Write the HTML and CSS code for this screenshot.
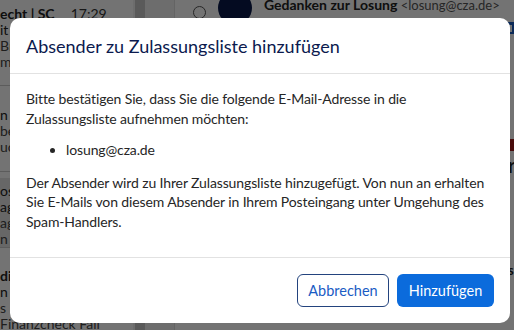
FILE: index.html
```html
<!DOCTYPE html>
<html lang="de">
<head>
    <meta charset="UTF-8">
    <meta name="viewport" content="width=device-width, initial-scale=1.0">
    <title>Absender zu Zulassungsliste hinzufügen</title>
    <link rel="stylesheet" href="styles.css">
</head>
<body>
    <!-- Mail app in the background -->
    <div class="app">
        <aside class="mail-list">
            <div class="mail-item">
                <div class="mail-top"><b>echt | SC</b><span class="mail-time">17:29</span></div>
                <div>it</div>
                <div class="muted">Br</div>
                <div class="muted">m</div>
            </div>
            <div class="mail-item">
                <div>&nbsp;</div>
                <div>n</div>
                <div class="muted">be</div>
                <div class="muted">uc</div>
            </div>
            <div class="mail-item selected">
                <div>os</div>
                <div>ag</div>
                <div class="muted">ag</div>
                <div class="muted">n 3</div>
            </div>
            <div class="mail-item">
                <div><b>di</b></div>
                <div>n Z</div>
                <div class="muted">s</div>
                <div class="muted">Finanzcheck Fall</div>
            </div>
        </aside>
        <div class="scrollbar"><div class="thumb"></div></div>
        <main class="reader">
            <div class="reader-head">
                <span class="radio"></span>
                <span class="avatar"></span>
                <div class="sender">
                    <div><b>Gedanken zur Losung</b> <span class="addr">&lt;losung@cza.de&gt;</span></div>
                    <div class="preview">Gedanken zur Tageslosung. Dennoch</div>
                </div>
                <span class="trash"></span>
            </div>
            <div class="reader-body">
                <div class="banner"></div>
                <div class="big">r</div>
                <div class="small"><b>s</b></div>
            </div>
        </main>
    </div>

    <div class="overlay"></div>

    <!-- Dialog -->
    <div class="dialog">
        <div class="dialog-header">
            <h2>Absender zu Zulassungsliste hinzufügen</h2>
        </div>
        <div class="dialog-body">
            <p>Bitte bestätigen Sie, dass Sie die folgende E-Mail-Adresse in die Zulassungsliste aufnehmen möchten:</p>
            <ul>
                <li>losung@cza.de</li>
            </ul>
            <p>Der Absender wird zu Ihrer Zulassungsliste hinzugefügt. Von nun an erhalten Sie E-Mails von diesem Absender in Ihrem Posteingang unter Umgehung des Spam-Handlers.</p>
        </div>
        <div class="dialog-footer">
            <button class="btn btn-outline">Abbrechen</button>
            <button class="btn btn-primary">Hinzufügen</button>
        </div>
    </div>
</body>
</html>
```

FILE: styles.css
```css
* {
    margin: 0;
    padding: 0;
    box-sizing: border-box;
}

body {
    width: 514px;
    height: 330px;
    overflow: hidden;
    font-family: 'Lato', 'Liberation Sans', sans-serif;
    color: #222;
    background: #fff;
}

/* Background app */
.app {
    display: flex;
    height: 330px;
}

.mail-list {
    width: 133px;
    font-size: 14px;
    line-height: 16px;
}

.mail-item {
    height: 86px;
    padding: 5px 0 0 0;
    border-bottom: 1px solid #ccc;
}

.mail-item:first-child {
    padding-top: 6px;
}

.mail-item.selected {
    background: #e4e4e4;
    height: 70px;
    margin-top: 6px;
}

.mail-item:last-child {
    padding-top: 20px;
}

.mail-top {
    display: flex;
    gap: 16px;
}

.mail-time {
    color: #333;
}

.muted {
    color: #444;
}

.scrollbar {
    width: 42px;
    display: flex;
    background: #f2f2f2;
    border-right: 1px solid #ddd;
}

.thumb {
    width: 10px;
    margin-left: 2px;
    background: #c8c8c8;
}

.reader {
    flex: 1;
    min-width: 0;
    overflow: hidden;
    background: #fff;
}

.reader-head {
    display: flex;
    align-items: flex-start;
    gap: 12px;
    padding-left: 18px;
    margin-top: -6px;
    font-size: 13px;
    line-height: 18px;
}

.radio {
    flex: none;
    width: 13px;
    height: 13px;
    margin-top: 12px;
    border: 1px solid #555;
    border-radius: 50%;
}

.avatar {
    flex: none;
    width: 34px;
    height: 34px;
    margin-top: -3px;
    background: #0a1a4a;
    border-radius: 50%;
}

.sender {
    flex: 1;
    min-width: 0;
    padding-top: 2px;
    white-space: nowrap;
    overflow: hidden;
}

.sender b {
    font-size: 14px;
}

.addr {
    color: #555;
}

.trash {
    flex: none;
    width: 10px;
    height: 12px;
    margin: 28px 0 0 -12px;
    border: 2px solid #1a5cc4;
    border-top-width: 3px;
}

.banner {
    margin: 105px 0 0 320px;
    height: 12px;
    background: #a31919;
}

.big {
    margin-left: 333px;
    font-size: 22px;
}

.small {
    margin: 84px 0 0 333px;
    font-size: 13px;
}

.overlay {
    position: fixed;
    inset: 0;
    background: rgba(0, 0, 0, 0.55);
}

/* Dialog */
.dialog {
    position: fixed;
    left: 10px;
    top: 18px;
    width: 500px;
    height: 305px;
    background: #fff;
    border-radius: 10px;
    display: flex;
    flex-direction: column;
    color: #262626;
}

.dialog-header {
    padding: 16px 16px 15px;
    border-bottom: 1px solid #e2e2e2;
}

.dialog-header h2 {
    font-size: 18px;
    line-height: 24px;
    font-weight: 400;
    color: #0b1a4e;
}

.dialog-body {
    flex: 1;
    padding: 15px 16px 0;
    font-size: 14px;
    line-height: 19.5px;
    letter-spacing: -0.12px;
}

.dialog-body ul {
    margin: 12px 0 13px;
    padding-left: 40px;
}

.dialog-footer {
    display: flex;
    justify-content: flex-end;
    gap: 8px;
    padding: 16px;
    border-top: 1px solid #e2e2e2;
}

.btn {
    height: 33px;
    padding: 0 10px;
    border-radius: 6px;
    font-family: inherit;
    font-size: 14.5px;
    cursor: pointer;
}

.btn-outline {
    width: 92px;
    background: #fff;
    color: #1a5cc4;
    border: 1px solid #23437e;
}

.btn-primary {
    width: 97px;
    background: #0b6bdc;
    color: #fff;
    border: none;
}
```
